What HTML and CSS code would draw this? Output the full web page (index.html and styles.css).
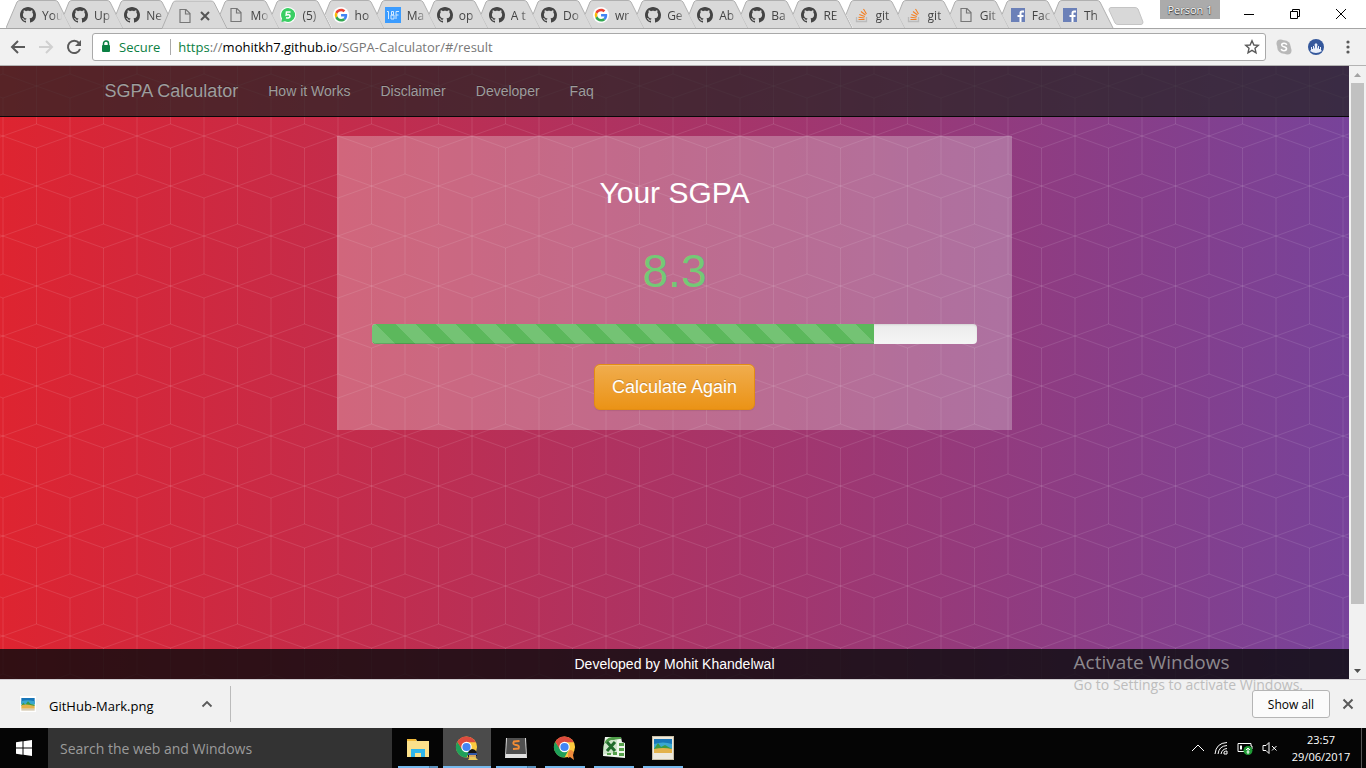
FILE: index.html
```html
<!DOCTYPE html>
<html lang="en">
<head>
<meta charset="utf-8">
<meta name="viewport" content="width=device-width, initial-scale=1">
<title>SGPA Calculator</title>
<link rel="stylesheet" href="styles.css">
</head>
<body>
<svg class="sprite" aria-hidden="true">
  <symbol id="tab" viewBox="0 0 66 28"><path class="tab-fill" d="M6 14.500 L11 2 Q12 0.500 14 0.500 H49 Q51 0.500 52 2 L65 28 H13 Z"/><path class="tab-line" d="M6 14.500 L11 2 Q12 0.500 14 0.500 H49 Q51 0.500 52 2 L65 28"/></symbol>
  <symbol id="tab-first" viewBox="0 0 66 28"><path class="tab-fill" d="M0 28 L11 2 Q12 0.500 14 0.500 H49 Q51 0.500 52 2 L65 28 Z"/><path class="tab-line" d="M0 28 L11 2 Q12 0.500 14 0.500 H49 Q51 0.500 52 2 L65 28"/></symbol>
  <symbol id="github" viewBox="0 0 16 16"><path fill="#444" d="M8 0C3.580 0 0 3.580 0 8c0 3.540 2.290 6.530 5.470 7.590.4.070.550-.170.550-.380 0-.190-.010-.820-.010-1.490-2.010.370-2.530-.490-2.690-.940-.090-.230-.480-.940-.820-1.130-.280-.150-.680-.520-.010-.530.630-.010 1.080.580 1.230.820.720 1.210 1.870.870 2.330.660.070-.520.280-.870.510-1.070-1.780-.2-3.640-.890-3.640-3.950 0-.870.310-1.590.820-2.150-.080-.2-.360-1.020.080-2.120 0 0 .670-.210 2.200.820.640-.180 1.320-.270 2-.270.680 0 1.360.090 2 .270 1.530-1.040 2.200-.820 2.200-.820.440 1.100.160 1.920.080 2.120.510.560.820 1.270.820 2.150 0 3.070-1.870 3.750-3.650 3.950.290.250.540.730.540 1.480 0 1.070-.010 1.930-.010 2.200 0 .210.150.460.550.380A8.013 8.013 0 0 0 16 8c0-4.420-3.580-8-8-8z"/></symbol>
  <symbol id="page" viewBox="0 0 16 16"><path d="M3 1.500H9L13 5.500V14.500H3Z M8.500 1.500V6H13" fill="none" stroke="#777" stroke-width="1.200"/></symbol>
  <symbol id="chat5" viewBox="0 0 16 16"><circle cx="8" cy="8" r="8" fill="#fff"/><path d="M8 1a7 7 0 1 1-3 13.300L1.500 15 2 11.500A7 7 0 0 1 8 1Z" fill="#3ace63"/><path d="M10.500 5H6.500L6.200 8Q10 6.800 10 9.200 9.800 11.600 6 10.800" fill="none" stroke="#fff" stroke-width="1.600"/></symbol>
  <symbol id="google" viewBox="0 0 48 48"><circle cx="24" cy="24" r="24" fill="#fff"/><g transform="translate(5 5) scale(.8)"><path fill="#EA4335" d="M24 9.500c3.540 0 6.710 1.220 9.210 3.600l6.850-6.850C35.900 2.380 30.470 0 24 0 14.620 0 6.510 5.380 2.560 13.220l7.980 6.190C12.430 13.720 17.740 9.500 24 9.500z"/><path fill="#4285F4" d="M46.980 24.550c0-1.570-.150-3.090-.380-4.550H24v9.020h12.940c-.580 2.960-2.260 5.480-4.780 7.180l7.730 6c4.510-4.180 7.090-10.360 7.090-17.650z"/><path fill="#FBBC05" d="M10.530 28.590A14.500 14.500 0 0 1 10.530 19.410L2.560 13.220a24 24 0 0 0 0 21.560z"/><path fill="#34A853" d="M24 48c6.480 0 11.930-2.130 15.890-5.810l-7.730-6C30 37.650 27.240 38.490 24 38.490c-6.260 0-11.570-4.220-13.470-9.910l-7.980 6.190C6.510 42.620 14.620 48 24 48z"/></g></symbol>
  <symbol id="f18" viewBox="0 0 16 16"><rect width="16" height="16" fill="#3b9cff"/><path d="M2 4.500H3.500V12M6.500 4.500H8.500V8H6V12H9V8H6.500ZM14 4.500H11V12M11 8H13.500" fill="none" stroke="#d5eaff"/></symbol>
  <symbol id="stack" viewBox="0 0 16 16"><path d="M2.500 10V14.500H12.500V10" fill="none" stroke="#bbb" stroke-width="1.300"/><path d="M4.500 12.500H10.500M4.500 10.300L10.500 11M5.300 7.500L10.800 9.500M7 4.500L11.500 8M9.500 2L12.500 7" fill="none" stroke="#f48024" stroke-width="1.100"/></symbol>
  <symbol id="facebook" viewBox="0 0 16 16"><path fill="#6b80b8" d="M1 1H15V15H1Z"/><path d="M14 4.500H12Q10.500 4.500 10.500 6V15M7.500 9H13.500" fill="none" stroke="#fff" stroke-width="2"/></symbol>
  <symbol id="photo" viewBox="0 0 24 24"><rect width="24" height="24" fill="#fff"/><rect x="2" y="3" width="20" height="9" fill="#1876b8"/><path d="M2 8Q10 5 22 8V13H2Z" fill="#3aa7cf"/><path d="M2 14L5 10 8 13 12 8 16 12 22 13V15H2Z" fill="#3c9b44"/><path d="M2 14Q10 11 22 15V19H2Z" fill="#e3b24b"/><path d="M2 19H22V22H2Z" fill="#d8ccb4"/></symbol>
  <symbol id="chrome" viewBox="0 0 24 24"><circle cx="12" cy="12" r="11" fill="#fcca3f"/><path d="M2.400 6.500A11 11 0 0 0 12 23L16.500 14.500 8 14.500Z" fill="#1fa05a"/><path d="M7 14L2.400 6.500A11 11 0 0 1 21.600 7H12Z" fill="#dc4b3e"/><circle cx="12" cy="12" r="5.500" fill="#fff"/><circle cx="12" cy="12" r="4.300" fill="#4285f4"/></symbol>
</svg>

<header class="titlebar">
  <nav class="tabs" aria-label="Open tabs">
    <button class="tab"><svg class="shape"><use href="#tab-first"/></svg><span class="label"><svg class="fav"><use href="#github"/></svg><span class="name">You</span></span></button>
    <button class="tab"><svg class="shape"><use href="#tab"/></svg><span class="label"><svg class="fav"><use href="#github"/></svg><span class="name">Up</span></span></button>
    <button class="tab"><svg class="shape"><use href="#tab"/></svg><span class="label"><svg class="fav"><use href="#github"/></svg><span class="name">Ne</span></span></button>
    <button class="tab active" aria-label="SGPA Calculator"><svg class="shape"><use href="#tab-first"/></svg><span class="label"><svg class="fav"><use href="#page"/></svg><svg class="close" viewBox="0 0 10 10"><path d="M1 1L9 9M9 1L1 9"/></svg></span></button>
    <button class="tab"><svg class="shape"><use href="#tab"/></svg><span class="label"><svg class="fav"><use href="#page"/></svg><span class="name">Mo</span></span></button>
    <button class="tab"><svg class="shape"><use href="#tab"/></svg><span class="label"><svg class="fav"><use href="#chat5"/></svg><span class="name">(5)</span></span></button>
    <button class="tab"><svg class="shape"><use href="#tab"/></svg><span class="label"><svg class="fav"><use href="#google"/></svg><span class="name">ho</span></span></button>
    <button class="tab"><svg class="shape"><use href="#tab"/></svg><span class="label"><svg class="fav"><use href="#f18"/></svg><span class="name">Ma</span></span></button>
    <button class="tab"><svg class="shape"><use href="#tab"/></svg><span class="label"><svg class="fav"><use href="#github"/></svg><span class="name">op</span></span></button>
    <button class="tab"><svg class="shape"><use href="#tab"/></svg><span class="label"><svg class="fav"><use href="#github"/></svg><span class="name">A t</span></span></button>
    <button class="tab"><svg class="shape"><use href="#tab"/></svg><span class="label"><svg class="fav"><use href="#github"/></svg><span class="name">Do</span></span></button>
    <button class="tab"><svg class="shape"><use href="#tab"/></svg><span class="label"><svg class="fav"><use href="#google"/></svg><span class="name">wr</span></span></button>
    <button class="tab"><svg class="shape"><use href="#tab"/></svg><span class="label"><svg class="fav"><use href="#github"/></svg><span class="name">Ge</span></span></button>
    <button class="tab"><svg class="shape"><use href="#tab"/></svg><span class="label"><svg class="fav"><use href="#github"/></svg><span class="name">Ab</span></span></button>
    <button class="tab"><svg class="shape"><use href="#tab"/></svg><span class="label"><svg class="fav"><use href="#github"/></svg><span class="name">Ba</span></span></button>
    <button class="tab"><svg class="shape"><use href="#tab"/></svg><span class="label"><svg class="fav"><use href="#github"/></svg><span class="name">RE</span></span></button>
    <button class="tab"><svg class="shape"><use href="#tab"/></svg><span class="label"><svg class="fav"><use href="#stack"/></svg><span class="name">git</span></span></button>
    <button class="tab"><svg class="shape"><use href="#tab"/></svg><span class="label"><svg class="fav"><use href="#stack"/></svg><span class="name">git</span></span></button>
    <button class="tab"><svg class="shape"><use href="#tab"/></svg><span class="label"><svg class="fav"><use href="#page"/></svg><span class="name">Git</span></span></button>
    <button class="tab"><svg class="shape"><use href="#tab"/></svg><span class="label"><svg class="fav"><use href="#facebook"/></svg><span class="name">Fac</span></span></button>
    <button class="tab"><svg class="shape"><use href="#tab"/></svg><span class="label"><svg class="fav"><use href="#facebook"/></svg><span class="name">Th</span></span></button>
  </nav>
  <button class="new-tab" aria-label="New tab"><svg width="36" height="18" viewBox="0 0 36 18"><path d="M3 .5H27Q29 .5 30 2L35 15Q35 17.500 33 17.500H10Q8 17.500 7 16L1 3Q1 .5 3 .5Z" fill="#d8d8d8" stroke="#c4c4c4"/></svg></button>
  <div class="window-controls">
    <button class="person">Person 1</button>
    <button class="control" aria-label="Minimize"><svg width="10" height="10" viewBox="0 0 10 10"><path d="M0 5.500H10"/></svg></button>
    <button class="control" aria-label="Restore"><svg width="10" height="10" viewBox="0 0 10 10"><path d="M.5 2.500H7.500V9.500H.5ZM2.500 2.500V.5H9.500V7.500H7.500"/></svg></button>
    <button class="control" aria-label="Close"><svg width="10" height="10" viewBox="0 0 10 10"><path d="M0 0L10 10M10 0L0 10"/></svg></button>
  </div>
</header>

<div class="toolbar">
  <button class="tool" aria-label="Back"><svg width="16" height="16" viewBox="0 0 16 16"><path d="M15 8H2.500M8 2L2 8L8 14" fill="none" stroke="#5a5a5a" stroke-width="2"/></svg></button>
  <button class="tool" aria-label="Forward"><svg width="16" height="16" viewBox="0 0 16 16"><path d="M1 8H13.500M8 2L14 8L8 14" fill="none" stroke="#d0d0d0" stroke-width="2"/></svg></button>
  <button class="tool" aria-label="Reload"><svg width="16" height="16" viewBox="0 0 16 16"><path d="M13 4A6.200 6.200 0 1 0 14 10" fill="none" stroke="#5a5a5a" stroke-width="2"/><path d="M15 1V7H9Z" fill="#5a5a5a"/></svg></button>
  <div class="omnibox">
    <svg width="10" height="14" viewBox="0 0 10 14"><path d="M2.500 6V3.500a2.500 2.500 0 0 1 5 0V6" fill="none" stroke="#0b8043" stroke-width="1.500"/><rect x="1" y="5" width="8" height="7" rx="1" fill="#0b8043"/></svg>
    <span class="secure">Secure</span>
    <div class="url" role="textbox" aria-label="Address" contenteditable="true" spellcheck="false"><span class="scheme">https</span><span class="path">://</span>mohitkh7.github.io<span class="path">/SGPA-Calculator/#/result</span></div>
    <button class="star" aria-label="Bookmark"><svg width="16" height="16" viewBox="0 0 16 16"><path d="M8 1.800L9.900 6 14.300 6.400 11 9.300 12 13.800 8 11.400 4 13.800 5 9.300 1.700 6.400 6.100 6Z" fill="none" stroke="#5a5a5a" stroke-width="1.400"/></svg></button>
  </div>
  <div class="extensions">
    <button class="tool" aria-label="Skype"><svg width="16" height="16" viewBox="0 0 16 16"><circle cx="8" cy="8" r="6.800" fill="#b8b8b8"/><circle cx="4.500" cy="4.500" r="4" fill="#b8b8b8"/><circle cx="11.500" cy="11.500" r="4" fill="#b8b8b8"/><path d="M10.800 5.800Q10 4.200 8 4.300 5.600 4.500 5.700 6 5.900 7.400 8 7.800 10.600 8.300 10.500 10 10.200 11.600 8 11.700 5.800 11.700 5.200 10" fill="none" stroke="#fff" stroke-width="1.600"/></svg></button>
    <button class="tool" aria-label="Profile extension"><svg width="16" height="16" viewBox="0 0 16 16"><circle cx="8" cy="8" r="8" fill="#35589c"/><path d="M3 11V8H4V10H5V7H6V10L7 8 6.500 5.500 8 4 9.500 5.500 9 8 10 10V7H11V10H12V8H13V11L14 12Q8 16 2 12Z" fill="#e9effa"/></svg></button>
    <button class="tool" aria-label="Menu"><svg width="16" height="16" viewBox="0 0 16 16"><g fill="#5a5a5a"><circle cx="8" cy="3" r="1.600"/><circle cx="8" cy="8" r="1.600"/><circle cx="8" cy="13" r="1.600"/></g></svg></button>
  </div>
</div>

<div class="viewport">
  <div class="site">
    <nav class="navbar">
      <div class="container">
        <a class="brand" href="#">SGPA Calculator</a>
        <a class="link" href="#how">How it Works</a>
        <a class="link" href="#disclaimer">Disclaimer</a>
        <a class="link" href="#developer">Developer</a>
        <a class="link" href="#faq">Faq</a>
      </div>
    </nav>
    <main class="content">
      <section class="result">
        <h2 class="title">Your SGPA</h2>
        <p class="score">8.3</p>
        <div class="progress"><div class="bar" role="progressbar" aria-label="SGPA" aria-valuenow="83" aria-valuemin="0" aria-valuemax="100" style="width:83%"></div></div>
        <button class="again">Calculate Again</button>
      </section>
    </main>
    <footer class="footer">Developed by Mohit Khandelwal</footer>
  </div>
  <div class="scrollbar">
    <button class="arrow" aria-label="Scroll up"><svg width="7" height="4" viewBox="0 0 7 4"><path d="M0 4L3.500 0 7 4Z" fill="#a3a3a3"/></svg></button>
    <div class="track"><div class="thumb"></div></div>
    <button class="arrow" aria-label="Scroll down"><svg width="7" height="4" viewBox="0 0 7 4"><path d="M0 0H7L3.500 4Z" fill="#505050"/></svg></button>
  </div>
</div>

<div class="shelf">
  <div class="watermark"><div class="mark-title">Activate Windows</div><div class="mark-text">Go to Settings to activate Windows.</div></div>
  <button class="download">
    <svg width="16" height="16"><use href="#photo"/></svg>
    <span class="file">GitHub-Mark.png</span>
    <svg width="12" height="8" viewBox="0 0 12 8"><path d="M1.500 6.500L6 2L10.500 6.500" fill="none" stroke="#5a5a5a" stroke-width="1.800"/></svg>
  </button>
  <button class="show-all">Show all</button>
  <button class="dismiss" aria-label="Close downloads"><svg width="12" height="12" viewBox="0 0 12 12"><path d="M1.500 1.500L10.500 10.500M10.500 1.500L1.500 10.500" stroke="#5a5a5a" stroke-width="2"/></svg></button>
</div>

<footer class="taskbar">
  <button class="start" aria-label="Start"><svg width="16" height="16" viewBox="0 0 16 16"><path fill="#fff" d="M0 2.200L6.500 1.300V7.500H0ZM7.500 1.200L16 0V7.500H7.500ZM0 8.500H6.500V14.700L0 13.800ZM7.500 8.500H16V16L7.500 14.800Z"/></svg></button>
  <input class="search" type="search" aria-label="Search the web and Windows" placeholder="Search the web and Windows">
  <div class="apps">
    <button class="app multi" aria-label="File Explorer"><svg width="24" height="24" viewBox="0 0 24 24"><path d="M1 3H10L11 5H23V21H1Z" fill="#fbe08a"/><path d="M1 3H10V5H1Z" fill="#f0b93a"/><path d="M5 21V13H19V21H15V17H9V21Z" fill="#2fb5ea"/></svg></button>
    <button class="app current" aria-label="Chrome, current window"><svg width="24" height="26" viewBox="0 0 24 26"><use href="#chrome" width="23" height="24"/><path d="M13 22Q12 15 17 14 22 14 22 21Z" fill="#151515"/><path d="M14 19H21V23H14Z" fill="#d7a55d"/><path d="M13 18H22V20H13Z" fill="#3157a8"/><path d="M13 25L15 22H20L23 25Z" fill="#e9c95b"/></svg></button>
    <button class="app multi" aria-label="Sublime Text"><svg width="24" height="24" viewBox="0 0 24 24"><path d="M2 2H22L23 22H1Z" fill="#e2e2e2"/><path d="M3 2H21L22 18H2Z" fill="#505050"/><path d="M15.500 5L10 5.500Q8 8.500 12 9 16 9.500 14.500 12.500L9 13" fill="none" stroke="#f28c35" stroke-width="2"/></svg></button>
    <button class="app" aria-label="Chrome"><svg width="24" height="26" viewBox="0 0 24 26"><use href="#chrome" width="23" height="24"/><path d="M15 20Q15 15 18 15 22 16 20 20L21 25 17 22 15 23Z" fill="#ef8b3d"/></svg></button>
    <button class="app" aria-label="Excel"><svg width="24" height="24" viewBox="0 0 24 24"><path d="M3 1H19L20 6 23 7V22L1 20 2 8Z" fill="#eef6ec"/><path d="M1 12Q3 1 10 1H19V3Q8 2 2 14Z" fill="#4f9d49"/><path d="M2 8L9 4H15V18H1Z" fill="#cfe5cb"/><path d="M5 6L13 15M13 6L5 15" stroke="#1f6b2b" stroke-width="3"/><path d="M17 7H22V10H17ZM17 12H22V15H17ZM17 17H22V20H17ZM11 16H15V19H11ZM5 17H9V19H5Z" fill="#55a04b"/></svg></button>
    <button class="app" aria-label="Photo viewer"><svg width="24" height="24" viewBox="0 0 24 24"><rect x="1" width="22" height="24" fill="#c9bfa7"/><rect x="2" y="1" width="20" height="22" fill="#eee9dc"/><rect x="3" y="3" width="18" height="8" fill="#1876b8"/><path d="M3 8Q12 5 21 8V13H3Z" fill="#3aa7cf"/><path d="M3 13L7 7 10 11 14 9 21 13V15H3Z" fill="#3c9b44"/><path d="M3 13Q12 11 21 13V17H3Z" fill="#e3b24b"/></svg></button>
  </div>
  <div class="tray">
    <button class="tray-icon" aria-label="Hidden icons"><svg width="14" height="14" viewBox="0 0 14 14"><path d="M1 10L7 4L13 10"/></svg></button>
    <button class="tray-icon" aria-label="Network"><svg width="14" height="14" viewBox="0 0 14 14"><path d="M1 13Q2 2 13 1.500M4 13Q5 5 13 4.500M7 13Q8 8 13 7.500"/><path d="M10 13V11Q11 10 13 10V13Z" fill="#fff"/></svg></button>
    <button class="tray-icon" aria-label="Battery"><svg width="16" height="14" viewBox="0 0 16 14"><path d="M1 2.500H14V5H15V8H14V10.500H1Z"/><path d="M3 4.500H5V8.500H3Z" class="charge"/><circle cx="11" cy="9.500" r="4.500" fill="#1f9b35"/><path d="M11 13V8M9 9L11 7 13 9M9.500 11H12.500"/></svg></button>
    <button class="tray-icon" aria-label="Muted"><svg width="16" height="14" viewBox="0 0 16 14"><path d="M1 4.500H4L7 1.500V12.500L4 9.500H1ZM10 5L14.500 9.500M14.500 5L10 9.500"/></svg></button>
    <button class="clock"><span>23:57</span><span>29/06/2017</span></button>
  </div>
</footer>
</body>
</html>
```
FILE: styles.css
```css
* { box-sizing: border-box; }

body {
  margin: 0;
  height: 100vh;
  display: flex;
  flex-direction: column;
  overflow: hidden;
  font-family: "Open Sans", "Noto Sans", sans-serif;
  font-size: 12px;
  color: #000;
  background: #f1f1f1;
}

button {
  margin: 0;
  padding: 0;
  border: 0;
  background: none;
  color: inherit;
  font: inherit;
}

svg { display: block; flex: none; }
.sprite { display: none; }

/* Browser tab strip */
.titlebar {
  flex: none;
  display: flex;
  height: 29px;
  padding-left: 6px;
  background: #fff;
  border-bottom: 1px solid #a5a5a5;
}
.tabs { flex: 0 1 1094px; display: flex; min-width: 0; }
.tab { flex: 1 1 0; min-width: 0; display: grid; align-items: center; text-align: left; }
.shape { grid-area: 1 / 1; width: 66px; height: 28px; }
.tab-fill { fill: #d9d9d9; }
.tab-line { fill: none; stroke: #b0b0b0; }
.label { grid-area: 1 / 1; display: flex; align-items: center; gap: 6px; padding: 2px 0 0 14px; }
.fav { width: 16px; height: 16px; }
.name {
  flex: none;
  white-space: nowrap;
  color: #444;
  mask-image: linear-gradient(90deg, #000 10px, transparent 20px);
}
.active { position: relative; z-index: 1; }
.active .shape { height: 29px; }
.active .tab-fill { fill: #f1f1f1; }
.active .label { padding-left: 15px; gap: 7px; }
.close { width: 10px; height: 10px; stroke: #555; stroke-width: 2; }
.new-tab { flex: none; align-self: flex-start; margin: 7px 0 0 8px; }
.window-controls { display: flex; align-items: flex-start; margin-left: auto; margin-right: 2px; }
.person {
  width: 60px;
  height: 19px;
  margin-right: 6px;
  background: #ababab;
  color: #fff;
  font-size: 11px;
  line-height: 18px;
  text-shadow: 0 1px 1px #333, 0 0 1px #333;
}
.control { width: 46px; height: 27px; display: grid; place-items: center; }
.control path { fill: none; stroke: #000; }

/* Browser toolbar */
.toolbar {
  flex: none;
  display: flex;
  align-items: center;
  gap: 12px;
  height: 37px;
  padding: 0 10px;
  background: #f1f1f1;
  border-bottom: 1px solid #b3b3b3;
}
.tool { flex: none; }
.omnibox {
  flex: 1;
  min-width: 0;
  display: flex;
  align-items: center;
  height: 28px;
  margin-left: -2px;
  padding: 0 5px 0 8px;
  background: #fff;
  border: 1px solid #a9a9a9;
  border-radius: 3px;
  font-size: 13px;
}
.secure { margin-left: 8px; padding-right: 10px; border-right: 1px solid #aaa; color: #0b8043; line-height: 16px; }
.url { flex: 1; min-width: 0; margin-left: 7px; white-space: nowrap; outline: 0; }
.scheme { color: #0b8043; }
.path { color: #777; }
.extensions { display: flex; gap: 16px; margin: 0 0 0 -2px; }

/* Web page */
.viewport { flex: 1; min-height: 0; display: flex; }
.site {
  flex: 1;
  min-width: 0;
  display: flex;
  flex-direction: column;
  font-family: "Liberation Sans", Arial, sans-serif;
  font-size: 14px;
  background:
    url("data:image/svg+xml,%3Csvg xmlns='http://www.w3.org/2000/svg' width='67' height='100'%3E%3Cpath d='M0 20L33.500 8L67 20L33.500 32ZM33.500 70L0 58M33.500 70L67 58M33.500 70L0 82M33.500 70L67 82M33.500 32V100M33.500 0V8M0 0V58M67 0V58M0 82V100M67 82V100' fill='none' stroke='white' stroke-opacity='.1'/%3E%3C/svg%3E") 3px 50px,
    linear-gradient(90deg, #de2430, #77439a);
}
.navbar { background: rgba(34, 34, 34, .72); border-bottom: 1px solid #080808; }
.container { display: flex; align-items: center; max-width: 1170px; height: 50px; margin: 0 auto; }
.brand, .link { padding: 0 15px; color: #9d9d9d; text-decoration: none; text-shadow: 0 -1px 0 rgba(0, 0, 0, .25); }
.brand { font-size: 18px; }
.content { flex: 1; padding-top: 19px; }
.result {
  width: 50%;
  margin: 0 auto;
  padding: 40px 35px 20px;
  text-align: center;
  background: rgba(240, 240, 240, .3);
}
.title { margin: 0; font-size: 30px; font-weight: 400; line-height: 33px; color: #fff; }
.score { margin: 36px 0 27px; font-size: 46px; line-height: 52px; color: #74c976; }
.progress {
  height: 20px;
  overflow: hidden;
  border-radius: 4px;
  background: linear-gradient(#ebebeb, #f5f5f5);
  box-shadow: inset 0 1px 2px rgba(0, 0, 0, .1);
}
.bar {
  height: 100%;
  background: linear-gradient(45deg, rgba(255, 255, 255, .15) 25%, transparent 25%, transparent 50%, rgba(255, 255, 255, .15) 50%, rgba(255, 255, 255, .15) 75%, transparent 75%) -16px 0 / 40px 40px, #5cb85c;
  box-shadow: inset 0 -1px 0 rgba(0, 0, 0, .15);
}
.again {
  margin-top: 20px;
  padding: 10px 17px;
  border: 1px solid #e38d13;
  border-radius: 6px;
  background: linear-gradient(#f0ad4e, #eb9316);
  box-shadow: inset 0 1px 0 rgba(255, 255, 255, .15), 0 1px 1px rgba(0, 0, 0, .08);
  color: #fff;
  font-size: 18px;
  line-height: 24px;
  text-shadow: 0 -1px 0 rgba(0, 0, 0, .2);
}
.footer { height: 30px; line-height: 30px; text-align: center; color: #fff; background: rgba(11, 11, 14, .82); }

.scrollbar { flex: none; display: flex; flex-direction: column; width: 17px; background: #f1f1f1; }
.arrow { height: 17px; display: grid; place-items: center; }
.track { flex: 1; }
.thumb { width: 13px; height: 90%; margin: 0 auto; background: #c1c1c1; }

/* Download shelf */
.shelf {
  position: relative;
  flex: none;
  display: flex;
  align-items: center;
  height: 49px;
  padding: 0 12px 0 20px;
  background: #f1f1f1;
  border-top: 1px solid #d0ccd0;
}
.download { display: flex; align-items: center; height: 36px; padding-right: 17px; border-right: 1px solid #bbb; font-size: 13px; }
.file { width: 165px; padding: 4px 0 0 13px; text-align: left; }
.show-all {
  position: relative;
  width: 78px;
  height: 28px;
  margin-left: auto;
  background: #fbfbfb;
  border: 1px solid #b5b5b5;
  border-radius: 3px;
}
.dismiss { margin-left: 12px; }
.watermark { position: absolute; right: 63px; top: -31px; pointer-events: none; white-space: nowrap; color: #8d888d; }
.mark-title { font-size: 19px; line-height: 26px; }
.mark-text { font-size: 14px; line-height: 20px; color: #bdbdbd; }

/* Windows taskbar */
.taskbar { flex: none; display: flex; height: 40px; background: #050505; color: #fff; }
.start { width: 48px; display: grid; place-items: center; }
.search {
  width: 344px;
  padding: 0 12px;
  border: 0;
  border-radius: 0;
  background: #333;
  color: #fff;
  font: 14px "Open Sans", "Noto Sans", sans-serif;
}
.search::placeholder { color: #9b9b9b; opacity: 1; }
.apps { display: flex; gap: 1px; margin-left: 2px; }
.app { width: 48px; display: grid; place-items: center; background: linear-gradient(#76b9ed, #76b9ed) center bottom / 40px 2px no-repeat; }
.multi { background: linear-gradient(90deg, #76b9ed 31px, #3f6b8c 31px, #5c93bf 32px) center bottom / 40px 2px no-repeat; }
.current { background: linear-gradient(#76b9ed, #76b9ed) center bottom / 48px 2px no-repeat #4b4b4b; }
.tray { display: flex; align-items: center; gap: 9px; margin-left: auto; margin-right: 4px; }
.tray-icon path { fill: none; stroke: #fff; }
.tray-icon .charge { fill: #fff; stroke: none; }
.clock {
  display: flex;
  flex-direction: column;
  justify-content: center;
  align-self: stretch;
  align-items: center;
  width: 75px;
  padding-right: 6px;
  border-right: 1px solid #555;
  font-size: 11px;
  line-height: 17px;
}
```
